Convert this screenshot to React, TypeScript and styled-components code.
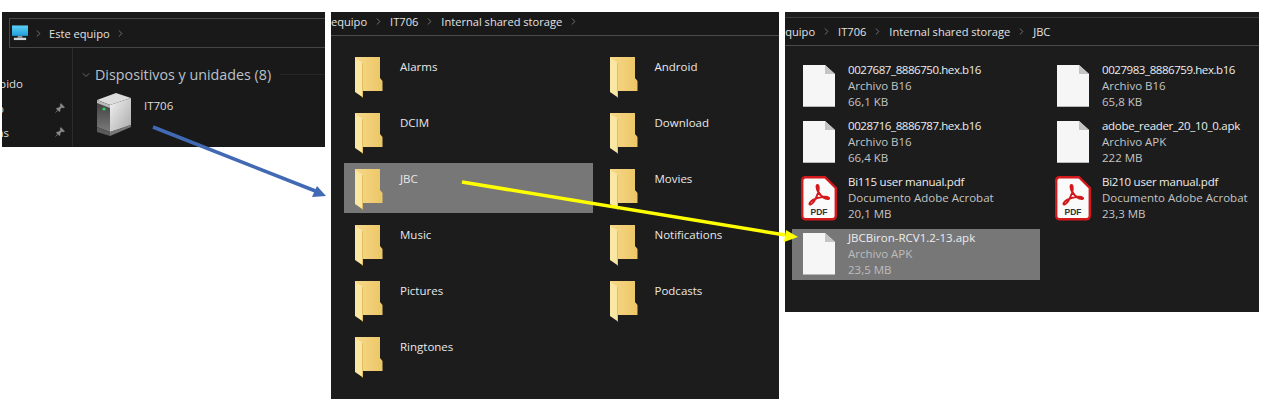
import styled, { createGlobalStyle } from 'styled-components'
import { ChevronRight, ChevronDown } from 'lucide-react'

const GlobalStyle = createGlobalStyle`
  html, body {
    background: #fff;
    margin: 0;
  }
  body {
    font-family: "Open Sans", "Noto Sans", sans-serif;
  }
`

const folders = [
  ['Alarms', 'Android'],
  ['DCIM', 'Download'],
  ['JBC', 'Movies'],
  ['Music', 'Notifications'],
  ['Pictures', 'Podcasts'],
  ['Ringtones'],
]

// tracking: the fallback font has wider digits than the one in the picture
const files = [
  { name: '0027687_8886750.hex.b16', type: 'Archivo B16', size: '66,1 KB', kind: 'file', tracking: -0.43 },
  { name: '0027983_8886759.hex.b16', type: 'Archivo B16', size: '65,8 KB', kind: 'file', tracking: -0.43 },
  { name: '0028716_8886787.hex.b16', type: 'Archivo B16', size: '66,4 KB', kind: 'file', tracking: -0.43 },
  { name: 'adobe_reader_20_10_0.apk', type: 'Archivo APK', size: '222 MB', kind: 'file', tracking: -0.3 },
  { name: 'Bi115 user manual.pdf', type: 'Documento Adobe Acrobat', size: '20,1 MB', kind: 'pdf', tracking: -0.24 },
  { name: 'Bi210 user manual.pdf', type: 'Documento Adobe Acrobat', size: '23,3 MB', kind: 'pdf', tracking: -0.24 },
  { name: 'JBCBiron-RCV1.2-13.apk', type: 'Archivo APK', size: '23,5 MB', kind: 'file', selected: true },
]

const Chevron = () => (
  <ChevronGlyph>
    <ChevronRight size={11} strokeWidth={2} />
  </ChevronGlyph>
)

const MonitorIcon = () => (
  <svg width="16" height="16" viewBox="0 0 17 16">
    <defs>
      <linearGradient id="screen" x1="0" y1="0" x2="0" y2="1">
        <stop offset="0" stopColor="#5fd0f5" />
        <stop offset="1" stopColor="#1e9fdc" />
      </linearGradient>
    </defs>
    <rect x="0" y="0" width="17" height="11" fill="url(#screen)" />
    <rect x="6" y="11" width="5" height="2" fill="#8a97a3" />
    <rect x="2" y="13" width="13" height="2.5" fill="#cfd6dc" />
  </svg>
)

const DriveIcon = () => (
  <svg width="37" height="44" viewBox="0 0 37 44">
    <defs>
      <linearGradient id="driveSide" x1="0" y1="0" x2="1" y2="1">
        <stop offset="0" stopColor="#f2f2f2" />
        <stop offset="1" stopColor="#a9a9a9" />
      </linearGradient>
      <linearGradient id="driveFront" x1="0" y1="0" x2="0" y2="1">
        <stop offset="0" stopColor="#3c3c3c" />
        <stop offset="1" stopColor="#7b7b7b" />
      </linearGradient>
    </defs>
    <polygon points="1,7 20,0 35,5 14,12" fill="#dcdcdc" />
    <polygon points="1,7 14,12 14,39 1,34" fill="url(#driveFront)" />
    <polygon points="1,7 14,12 14,15 1,10" fill="#b9b9b9" />
    <polygon points="14,12 35,5 35,32 14,39" fill="url(#driveSide)" />
    <polygon points="1,34 14,39 14,43 1,39" fill="#5a5a5a" />
    <polygon points="14,39 35,32 35,34 14,43" fill="#777" />
    <circle cx="8" cy="16" r="1.6" fill="#2fd25b" />
  </svg>
)

const PinIcon = () => (
  <svg width="10" height="10" viewBox="0 0 10 10">
    <path d="M5.8 .5 9.5 4.2 8.6 4.7 7 4.3 5 6.3 5 8 4.3 8.6 1.4 5.7 2 5 3.7 5 5.7 3 5.3 1.4ZM2.8 7.2 .5 9.5" fill="#8a8a8a" stroke="#8a8a8a" strokeWidth=".7" />
  </svg>
)

const FolderIcon = () => (
  <svg width="28" height="41" viewBox="0 0 28 41">
    <defs>
      <linearGradient id="folderBody" x1="0" y1="0" x2="1" y2="0">
        <stop offset="0" stopColor="#f7d98a" />
        <stop offset="1" stopColor="#ecc666" />
      </linearGradient>
    </defs>
    <path d="M0 0H25V21L27.500 24V34H8V30H0Z" fill="url(#folderBody)" />
    <path d="M0 1 8 6V40.500L0 35Z" fill="#fbe7a4" />
    <path d="M8 6V40.500L7 40V6Z" fill="#e4bd60" />
  </svg>
)

const FileIcon = () => (
  <svg width="32" height="43" viewBox="0 0 32 43">
    <path d="M0 0H22L32 9V42H0Z" fill="#f6f6f6" />
    <path d="M22 0 32 9H22Z" fill="#c4c4c4" />
    <path d="M0 41.500H32" stroke="#b9b9b9" strokeWidth="1" />
  </svg>
)

const PdfIcon = () => (
  <svg width="36" height="45" viewBox="0 0 36 45">
    <path d="M4 1.200H24L34.800 12V40A3.300 3.300 0 0 1 31.500 43.300H4.500A3.300 3.300 0 0 1 1.200 40V4.500A3.300 3.300 0 0 1 4 1.200Z" fill="#fafafa" stroke="#d3191c" strokeWidth="2.400" />
    <path d="M16.500 9C15 9 15.500 12.500 17 15.500C18.500 18.500 21 21 24.500 22.500C27.500 23.500 29 22.500 27.500 21.500C25 20 17.500 21 12 24C8.500 26 7.500 29 9.500 28.500C12 28 15 22.500 17 17C18 14 18 9 16.500 9Z" fill="none" stroke="#d3191c" strokeWidth="2" />
    <text x="18" y="39" textAnchor="middle" fontSize="8.500" fontWeight="700" fill="#333" fontFamily="Liberation Sans, sans-serif">PDF</text>
  </svg>
)

const App = () => {
  return (
    <Canvas>
      <GlobalStyle />

      <ThisPcWindow>
        <AddressBox>
          <MonitorIcon />
          <Chevron />
          <Crumb>Este equipo</Crumb>
          <Chevron />
        </AddressBox>
        <PcBody>
          <Sidebar>
            <QuickAccess>
              <SideLabel $width={21}>Acceso rápido</SideLabel>
            </QuickAccess>
            <PinnedRow>
              <SideLabel $width={2}>Escritorio</SideLabel>
              <PinIcon />
            </PinnedRow>
            <PinnedRow>
              <SideLabel $width={7}>Descargas</SideLabel>
              <PinIcon />
            </PinnedRow>
          </Sidebar>
          <DevicesPane>
            <GroupHeading>
              <ChevronDown size={12} color="#666" />
              <GroupTitle>Dispositivos y unidades (8)</GroupTitle>
              <GroupRule />
            </GroupHeading>
            <DriveRow>
              <DriveIcon />
              <DriveLabel>IT706</DriveLabel>
            </DriveRow>
          </DevicesPane>
        </PcBody>
      </ThisPcWindow>

      <StorageWindow>
        <PathBar $height={24} $lift={4}>
          <Crumb>equipo</Crumb>
          <Chevron />
          <Crumb>IT706</Crumb>
          <Chevron />
          <Crumb>Internal shared storage</Crumb>
          <Chevron />
        </PathBar>
        <FolderGrid>
          {folders.flat().map(name => (
            <FolderTile key={name} $selected={name === 'JBC'}>
              <FolderIcon />
              <FolderName>{name}</FolderName>
            </FolderTile>
          ))}
        </FolderGrid>
      </StorageWindow>

      <JbcWindow>
        <PathBar $height={34} $topGap={5}>
          <ClippedCrumb>equipo</ClippedCrumb>
          <Chevron />
          <Crumb>IT706</Crumb>
          <Chevron />
          <Crumb>Internal shared storage</Crumb>
          <Chevron />
          <Crumb>JBC</Crumb>
        </PathBar>
        <FileGrid>
          {files.map(file => (
            <FileTile key={file.name} $selected={file.selected}>
              <FileIconSlot>{file.kind === 'pdf' ? <PdfIcon /> : <FileIcon />}</FileIconSlot>
              <FileText>
                <FileName $tracking={file.tracking}>{file.name}</FileName>
                <FileMeta $selected={file.selected}>{file.type}</FileMeta>
                <FileMeta $selected={file.selected}>{file.size}</FileMeta>
              </FileText>
            </FileTile>
          ))}
        </FileGrid>
      </JbcWindow>

      <ArrowLayer width="1267" height="402" viewBox="0 0 1267 402">
        <line x1="153" y1="127" x2="318" y2="192" stroke="#4169b4" strokeWidth="3.500" />
        <polygon points="326,196 312,197 317,186" fill="#4169b4" />
        <line x1="462" y1="182" x2="785" y2="235" stroke="#ffff00" strokeWidth="3.500" />
        <polygon points="798,237 784,242 786,230" fill="#ffff00" />
      </ArrowLayer>
    </Canvas>
  )
}

export default App

const Canvas = styled.div`
  align-items: flex-start;
  box-sizing: border-box;
  display: flex;
  gap: 6px;
  height: 402px;
  overflow: hidden;
  padding: 12px 0 0 2px;
  position: relative;
  width: 1267px;
`

const ArrowLayer = styled.svg`
  left: 0;
  pointer-events: none;
  position: absolute;
  top: 0;
`

const ThisPcWindow = styled.section`
  background: #191919;
  box-sizing: border-box;
  color: #e6e6e6;
  height: 135px;
  overflow: hidden;
  padding-top: 6px;
  width: 323px;
`

const ChevronGlyph = styled.span`
  color: #777;
  display: inline-flex;
  margin: 0 6px;
`

const AddressBox = styled.div`
  align-items: center;
  border: 1px solid #454545;
  border-right: 0;
  box-sizing: border-box;
  display: flex;
  height: 30px;
  margin-left: 7px;
  padding-left: 2px;

  ${ChevronGlyph} {
    margin: 0 5px;
  }
`

const Crumb = styled.span`
  color: #e2e2e2;
  font-size: 11.1px;
  white-space: nowrap;
`

const ClippedCrumb = styled(Crumb)`
  margin-left: -6px;
`

const PcBody = styled.div`
  display: flex;
  height: 99px;
`

const Sidebar = styled.nav`
  border-right: 1px solid #2b2b2b;
  box-sizing: border-box;
  flex: 0 0 71px;
  padding-top: 28px;
`

const QuickAccess = styled.div`
  height: 20px;
`

const PinnedRow = styled.div`
  align-items: center;
  display: flex;
  height: 24px;
  justify-content: space-between;
  padding-right: 7px;
`

const SideLabel = styled.div<{ $width: number }>`
  color: #dcdcdc;
  display: flex;
  font-size: 11.5px;
  justify-content: flex-end;
  overflow: hidden;
  white-space: nowrap;
  width: ${p => p.$width}px;
`

const DevicesPane = styled.div`
  flex: 1;
  padding: 17px 0 0 7px;
`

const GroupHeading = styled.div`
  align-items: center;
  display: flex;
  gap: 3px;
`

const GroupTitle = styled.span`
  color: #b9c2c9;
  font-size: 14.3px;
  white-space: nowrap;
`

const GroupRule = styled.span`
  background: #262626;
  flex: 1;
  height: 1px;
  margin-left: 6px;
`

const DriveRow = styled.div`
  align-items: flex-start;
  display: flex;
  gap: 11px;
  margin: 9px 0 0 16px;
`

const DriveLabel = styled.span`
  color: #dedede;
  font-size: 11.5px;
  line-height: 16px;
  margin-top: 5px;
`

const StorageWindow = styled.section`
  background: #1c1c1c;
  height: 387px;
  overflow: hidden;
  width: 448px;
`

const JbcWindow = styled.section`
  background: #1c1c1c;
  height: 300px;
  overflow: hidden;
  width: 474px;
`

const PathBar = styled.div<{ $height: number; $topGap?: number; $lift?: number }>`
  align-items: center;
  background: #191919;
  border-bottom: 1px solid #4a4a4a;
  border-top: ${p => (p.$topGap ? '1px solid #3a3a3a' : '0')};
  box-sizing: border-box;
  display: flex;
  height: ${p => p.$height - (p.$topGap ?? 0)}px;
  margin-top: ${p => p.$topGap ?? 0}px;
  padding-bottom: ${p => p.$lift ?? 0}px;
`

const FolderGrid = styled.div`
  display: grid;
  gap: 6px 5.5px;
  grid-auto-rows: 50px;
  grid-template-columns: 249px 170px;
  padding: 15px 0 0 13px;
`

const FolderTile = styled.div<{ $selected?: boolean }>`
  background: ${p => (p.$selected ? '#777777' : 'transparent')};
  display: flex;
  gap: 17px;
  padding: 6px 0 0 11px;
`

const FolderName = styled.span`
  color: #e8e8e8;
  font-size: 11.5px;
  line-height: 16px;
  margin-top: 2px;
`

const FileGrid = styled.div`
  display: grid;
  gap: 5px 6px;
  grid-auto-rows: 51px;
  grid-template-columns: 248px 210px;
  padding: 15px 0 0 7px;
`

const FileTile = styled.div<{ $selected?: boolean }>`
  background: ${p => (p.$selected ? '#777777' : 'transparent')};
  display: flex;
  gap: 11px;
  padding: 1px 0 0 9px;
`

const FileIconSlot = styled.div`
  align-items: center;
  display: flex;
  height: 49px;
  justify-content: center;
  width: 36px;
`

const FileText = styled.div`
  display: flex;
  flex-direction: column;
  font-size: 11.5px;
  line-height: 16px;
  white-space: nowrap;
`

const FileName = styled.span<{ $tracking?: number }>`
  color: #ededed;
  letter-spacing: ${p => p.$tracking ?? 0}px;
`

const FileMeta = styled.span<{ $selected?: boolean }>`
  color: ${p => (p.$selected ? '#bdbdbd' : '#c4c4c4')};
`
